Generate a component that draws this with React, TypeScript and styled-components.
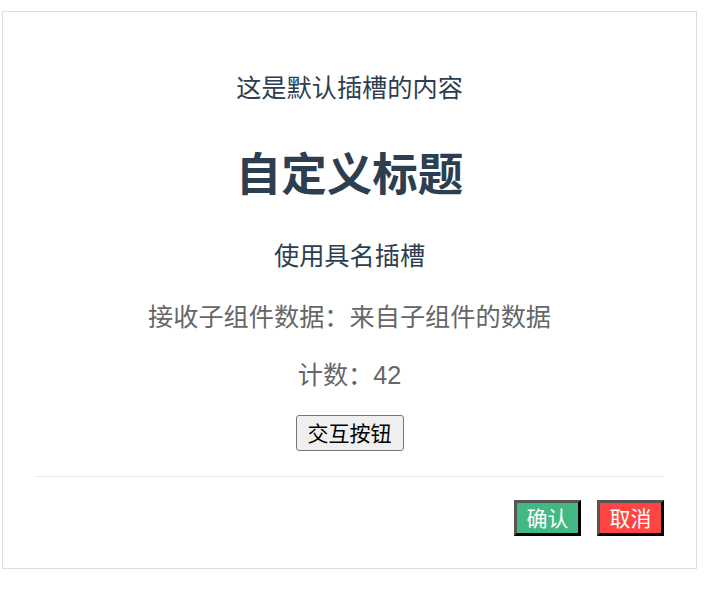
import styled, { createGlobalStyle } from 'styled-components'

const GlobalStyle = createGlobalStyle`
	body {
		margin: 0;
		background: #fff;
		font-family: 'Liberation Sans', 'Noto Sans CJK SC', sans-serif;
	}
`

const Page = styled.div`
	padding: 11px 0 0 2px;
`

const Card = styled.div`
	width: 695px;
	border: 1px solid #ddd;
	padding: 32px 32px 32px;
	box-sizing: border-box;
	text-align: center;
	color: #2c3e50;
`

const Body = styled.div`
	display: flex;
	flex-direction: column;
	align-items: center;
`

type TextProps = {
	muted?: boolean
	gap: number
}

const Text = styled.p<TextProps>`
	margin: ${({ gap }) => gap}px 0 0;
	font-size: 25.2px;
	line-height: 35px;
	color: ${({ muted }) => (muted ? '#666' : '#2c3e50')};
`

const Title = styled.h1`
	margin: 43px 0 0;
	font-size: 45.5px;
	line-height: 54px;
	font-weight: 700;
	color: #2c3e50;
`

const ActionButton = styled.button`
	margin-top: 22px;
	height: 36px;
	box-sizing: border-box;
	padding: 0 11px;
	font-family: inherit;
	font-size: 21px;
	line-height: 1;
	color: #000;
	background: #efefef;
	border: 1px solid #767676;
	border-radius: 3px;
`

const Footer = styled.div`
	margin-top: 25px;
	padding-top: 23px;
	border-top: 1px solid #eee;
	display: flex;
	justify-content: flex-end;
	gap: 16px;
`

type FooterButtonProps = {
	tone: string
}

const FooterButton = styled.button<FooterButtonProps>`
	width: 67px;
	height: 36px;
	box-sizing: border-box;
	padding: 0;
	font-family: inherit;
	font-size: 21px;
	line-height: 1;
	color: #fff;
	background: ${({ tone }) => tone};
	border-style: solid;
	border-width: 3px;
	border-color: #555 #000 #000 #555;
`

export default function App() {
	return (
		<>
			<GlobalStyle />
			<Page>
				<Card>
					<Body>
						<Text gap={27}>这是默认插槽的内容</Text>
						<Title>自定义标题</Title>
						<Text gap={36}>使用具名插槽</Text>
						<Text gap={26} muted>接收子组件数据：来自子组件的数据</Text>
						<Text gap={23} muted>计数：42</Text>
						<ActionButton>交互按钮</ActionButton>
					</Body>
					<Footer>
						<FooterButton tone="#42b983">确认</FooterButton>
						<FooterButton tone="#ff4444">取消</FooterButton>
					</Footer>
				</Card>
			</Page>
		</>
	)
}
